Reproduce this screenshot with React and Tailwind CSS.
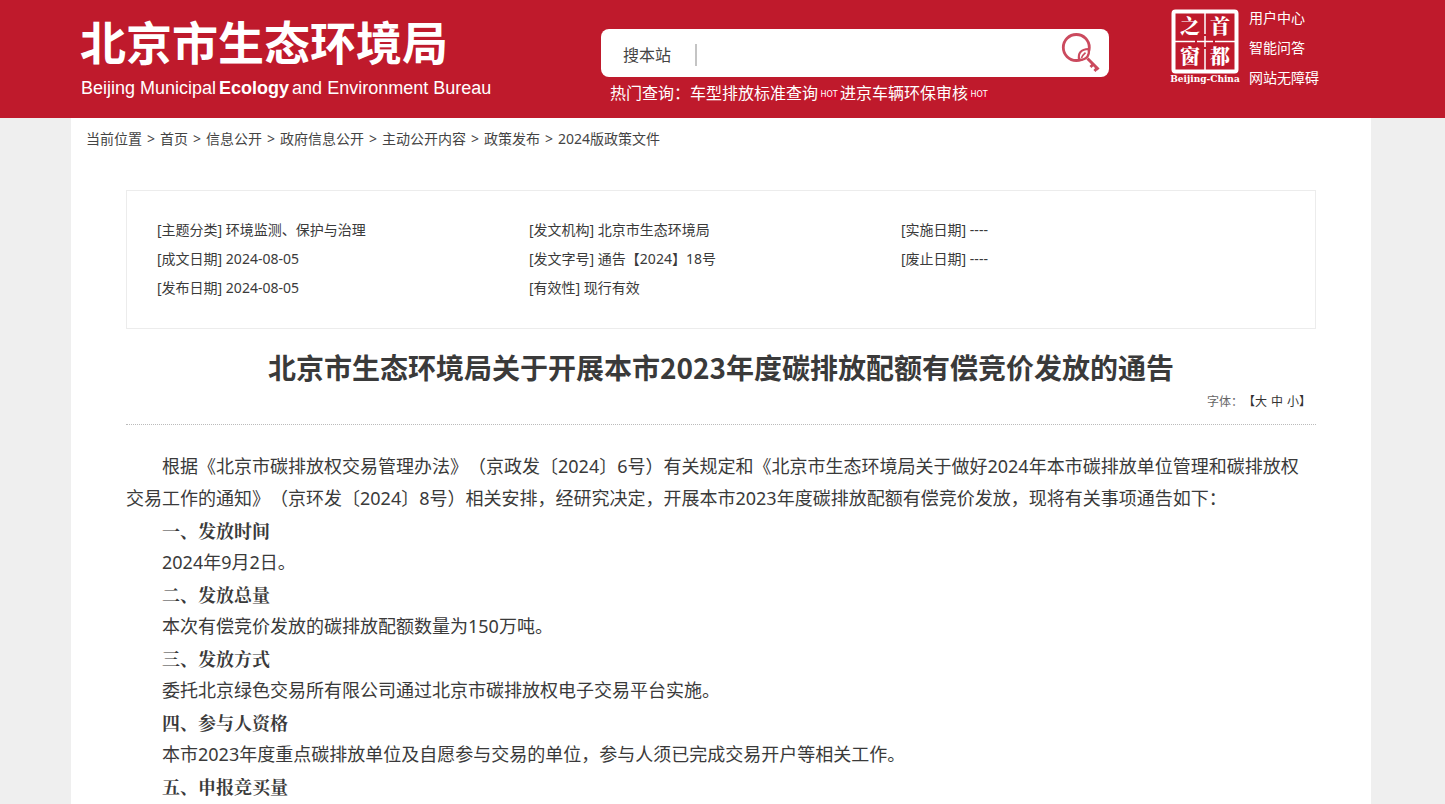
import { useState } from 'react';

const crumbs = ['首页', '信息公开', '政府信息公开', '主动公开内容', '政策发布', '2024版政策文件'];

const info = [
  ['主题分类', '环境监测、保护与治理'],
  ['发文机构', '北京市生态环境局'],
  ['实施日期', '----'],
  ['成文日期', '2024-08-05'],
  ['发文字号', '通告【2024】18号'],
  ['废止日期', '----'],
  ['发布日期', '2024-08-05'],
  ['有效性', '现行有效'],
];

const sections = [
  { title: '一、发放时间', text: '2024年9月2日。' },
  { title: '二、发放总量', text: '本次有偿竞价发放的碳排放配额数量为150万吨。' },
  { title: '三、发放方式', text: '委托北京绿色交易所有限公司通过北京市碳排放权电子交易平台实施。' },
  { title: '四、参与人资格', text: '本市2023年度重点碳排放单位及自愿参与交易的单位，参与人须已完成交易开户等相关工作。' },
  { title: '五、申报竞买量' },
];

const SearchIcon = () => (
  <svg viewBox="0 0 40 40" className="h-10 w-10" fill="none" stroke="#cb4a5e" aria-hidden="true">
    <circle cx="15.3" cy="14.5" r="13" strokeWidth="2.8" />
    <path d="M18.2 26.700c-1.500-6 1.500-10.500 9.500-10.700 1 6-1.500 11-9.500 10.700z" fill="#fff" strokeWidth="2.2" />
    <path d="M20.500 25c1-2.200 2.200-3.800 4-5.300" strokeWidth="1.700" />
    <path d="M26.500 25.500L37.500 36.500" strokeWidth="3" />
    <path d="M32.500 31l-3 3M36.500 34.500l-3 3.500" strokeWidth="2.800" />
  </svg>
);

const CapitalSeal = () => (
  <svg viewBox="0 0 74 78" className="h-[78px] w-[74px] shrink-0" aria-hidden="true">
    <rect x="4.500" y="3.500" width="63" height="60" rx="2" fill="none" stroke="#fff" strokeWidth="4" />
    <path d="M36 5v21M36 28v11M36 41v21M6 33.500h20M28 33.500h16M46 33.500h20" stroke="#fff" strokeWidth="1.500" />
    <g fill="#fff" fontFamily="'Noto Serif CJK SC','Noto Sans CJK SC',serif" fontWeight="900" fontSize="20" textAnchor="middle">
      <text x="21" y="26">之</text>
      <text x="51" y="26">首</text>
      <text x="21" y="56">窗</text>
      <text x="51" y="56">都</text>
    </g>
    <text x="36" y="74" fill="#fff" fontFamily="'DejaVu Serif',serif" fontWeight="700" fontSize="9" textAnchor="middle">
      Beijing-China
    </text>
  </svg>
);

const Hot = () => (
  <span className="mt-1 w-[22px] bg-[#cf0a2c] text-center font-['DejaVu_Sans'] text-[8px] leading-[10px]">HOT</span>
);

const Header = () => {
  const [keyword, setKeyword] = useState('');

  return (
    <header className="bg-[#bf1a2c] pr-[3px] text-white">
      <div className="mx-auto flex h-[118px] max-w-[1300px] items-start">
        <a href="#" className="block w-[530px] shrink-0 pl-[9px] pt-[10px]">
          <span className="block text-[46px] font-bold leading-[64px]">北京市生态环境局</span>
          <span className="flex gap-[3px] whitespace-nowrap pl-px pt-[2px] font-['Liberation_Sans'] text-lg leading-6">
            <span>Beijing Municipal</span>
            <b>Ecology</b>
            <span>and Environment Bureau</span>
          </span>
        </a>
        <div className="w-[508px] pt-[29px]">
          <form
            className="flex h-12 items-center rounded-lg bg-white pl-[22px] pr-2 text-base text-[#444]"
            onSubmit={(e) => e.preventDefault()}
          >
            <label htmlFor="keyword" className="w-[72px] pt-1">搜本站</label>
            <span className="mt-1 h-[22px] w-[2px] bg-[#c4c4c4]" />
            <input
              id="keyword"
              type="text"
              value={keyword}
              onChange={(e) => setKeyword(e.target.value)}
              className="min-w-0 flex-1 px-2 outline-none"
            />
            <button type="submit" aria-label="搜索"><SearchIcon /></button>
          </form>
          <p className="flex items-center whitespace-nowrap pl-[9px] pt-1 text-base">
            热门查询：
            <a href="#">车型排放标准查询</a>
            <Hot />
            <a href="#">进京车辆环保审核</a>
            <Hot />
          </p>
        </div>
        <div className="ml-auto flex gap-[6px] pr-[52px]">
          <div className="pt-2"><CapitalSeal /></div>
          <nav className="flex flex-col pt-[3px] text-sm">
            <a href="#" className="leading-[30px]">用户中心</a>
            <a href="#" className="leading-[30px]">智能问答</a>
            <a href="#" className="leading-[30px]">网站无障碍</a>
          </nav>
        </div>
      </div>
    </header>
  );
};

const App = () => (
  <div className="flex min-h-screen flex-col bg-[#efefef] font-['Noto_Sans','Noto_Sans_CJK_SC',sans-serif] text-[#3a3a3a] [text-spacing-trim:space-all]">
    <Header />
    <div className="flex flex-1 flex-col pr-[3px]">
      <main className="mx-auto w-full max-w-[1300px] flex-1 bg-white">
        <nav className="flex h-[42px] items-center pl-[15px] text-sm text-[#444]">
          <span>当前位置</span>
          {crumbs.map((item) => (
            <span key={item} className="flex">
              <span className="w-[18px] text-center">&gt;</span>
              <a href="#">{item}</a>
            </span>
          ))}
        </nav>
        <div className="px-[55px] pt-[30px]">
          <ul className="grid grid-cols-[372px_372px_1fr] border border-[#ececec] pb-[26px] pl-[30px] pt-6 text-sm">
            {info.map(([label, value]) => (
              <li key={label} className="leading-[29px]">[{label}] {value}</li>
            ))}
          </ul>
          <h1 className="pb-px pt-[18px] text-center font-['Noto_Sans_CJK_SC'] text-[28px] font-bold leading-10">
            北京市生态环境局关于开展本市2023年度碳排放配额有偿竞价发放的通告
          </h1>
          <div className="flex h-[37px] items-start justify-end border-b border-dotted border-[#bbb] pr-[5px] pt-[5px] text-xs leading-[18px] text-[#666]">
            字体：
            <span className="flex gap-1 text-[#333]">
              <span>【<button type="button">大</button></span>
              <button type="button">中</button>
              <span><button type="button">小</button>】</span>
            </span>
          </div>
          <article className="pt-[25px] text-lg leading-8">
            <p className="indent-[36px]">
              根据《北京市碳排放权交易管理办法》（京政发〔2024〕6号）有关规定和《北京市生态环境局关于做好2024年本市碳排放单位管理和碳排放权交易工作的通知》（京环发〔2024〕8号）相关安排，经研究决定，开展本市2023年度碳排放配额有偿竞价发放，现将有关事项通告如下：
            </p>
            {sections.map((s) => (
              <section key={s.title} className="indent-[36px]">
                <h2 className="font-['Noto_Serif_CJK_SC','Noto_Sans_CJK_SC',serif] font-bold">{s.title}</h2>
                {s.text && <p>{s.text}</p>}
              </section>
            ))}
          </article>
        </div>
      </main>
    </div>
  </div>
);

export default App;
